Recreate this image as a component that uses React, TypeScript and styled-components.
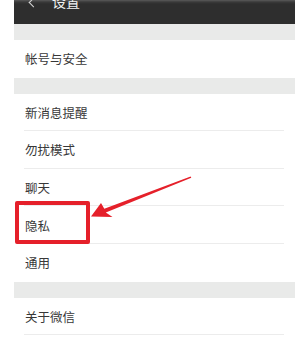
import React from "react";
import styled, { createGlobalStyle } from "styled-components";

const GlobalStyle = createGlobalStyle`
  html, body {
    margin: 0;
    padding: 0;
    background: #ffffff;
  }
  body {
    font-family: "Noto Sans CJK SC", "Noto Sans", sans-serif;
  }
`;

const Page = styled.div`
  position: relative;
  width: 296px;
  height: 341px;
  overflow: hidden;
  background: #ffffff;
`;

const Screen = styled.div`
  margin-left: 14px;
  width: 281px;
  display: flex;
  flex-direction: column;
`;

const Header = styled.div`
  height: 24px;
  background: linear-gradient(#5a5a5a 0, #3a3a3a 2px, #2e2e2e 4px, #2e2e2e 100%);
  display: flex;
  align-items: flex-start;
  color: #ffffff;
  overflow: hidden;
`;

const Back = styled.span`
  width: 8px;
  height: 8px;
  margin: -1px 0 0 14px;
  display: block;
  position: relative;
  &::before {
    content: "";
    position: absolute;
    left: 2px;
    top: 0;
    width: 6px;
    height: 6px;
    border-left: 1px solid #d8d8d8;
    border-bottom: 1px solid #d8d8d8;
    transform: rotate(45deg);
  }
`;

const Title = styled.span`
  margin: -9px 0 0 16px;
  font-size: 14px;
  line-height: 20px;
  color: #f2f2f2;
`;

const Gap = styled.div`
  height: 16px;
  background: #e9eae9;
`;

const Group = styled.div`
  background: #ffffff;
`;

const Item = styled.div<{ $divider?: boolean }>`
  height: 37.6px;
  box-sizing: border-box;
  display: flex;
  align-items: center;
  padding-left: 11px;
  font-size: 12.5px;
  color: #383838;
  position: relative;
  &::after {
    content: "";
    display: ${(p) => (p.$divider ? "block" : "none")};
    position: absolute;
    left: 10px;
    right: 11px;
    bottom: 0;
    height: 1px;
    background: #ececec;
  }
`;

const Highlight = styled.div`
  position: absolute;
  left: 15px;
  top: 201px;
  width: 75px;
  height: 43px;
  box-sizing: border-box;
  border: 4px solid #e5202a;
  border-radius: 2px;
`;

const Overlay = styled.svg`
  position: absolute;
  left: 0;
  top: 0;
  pointer-events: none;
`;

const groups: { label: string }[][] = [
  [{ label: "帐号与安全" }],
  [
    { label: "新消息提醒" },
    { label: "勿扰模式" },
    { label: "聊天" },
    { label: "隐私" },
    { label: "通用" },
  ],
];

export default function App() {
  return (
    <Page>
      <GlobalStyle />
      <Screen>
        <Header>
          <Back />
          <Title>设置</Title>
        </Header>
        {groups.map((g, gi) => (
          <React.Fragment key={gi}>
            <Gap />
            <Group>
              {g.map((it, i) => (
                <Item key={it.label} $divider={i < g.length - 1}>
                  {it.label}
                </Item>
              ))}
            </Group>
          </React.Fragment>
        ))}
        <Gap />
        <Group>
          <Item $divider>关于微信</Item>
        </Group>
      </Screen>
      <Highlight />
      <Overlay width="296" height="341" viewBox="0 0 296 341">
        <polygon
          points="91,216.5 112.5,217 105.8,212.6 191.3,177.8 190.6,176.4 104.3,208.7 101,203"
          fill="#e5202a"
        />
      </Overlay>
    </Page>
  );
}
